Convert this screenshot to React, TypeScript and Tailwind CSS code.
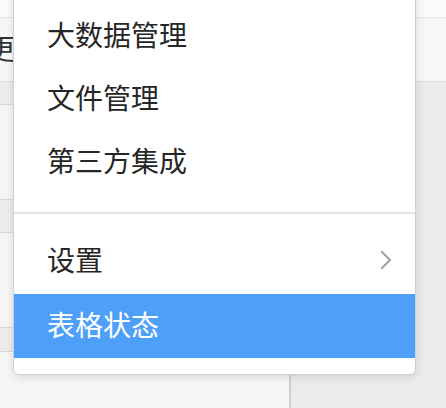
const topItems = ['大数据管理', '文件管理', '第三方集成']

export default function App() {
  return (
    <div
      className="relative w-[446px] h-[408px] overflow-hidden bg-[#f5f5f5]"
      style={{ fontFamily: '"Noto Sans CJK SC", "Noto Sans", sans-serif' }}
    >
      {/* table behind the menu */}
      <div className="flex h-full">
        <div className="flex flex-col w-[289px]">
          <div className="h-[18px] bg-[#fafafa] border-b border-[#e2e2e2]" />
          <div className="h-[64px] bg-[#f7f7f7] border-b border-[#dcdcdc] flex items-center pb-[4px]">
            <div className="w-[15px] overflow-hidden flex justify-end">
              <span className="text-[28px] leading-none text-[#333] whitespace-nowrap">变更</span>
            </div>
          </div>
          <div className="h-[23px] bg-[#ececec] border-b border-[#d8d8d8]" />
          <div className="h-[94px] bg-[#f5f5f5]" />
          <div className="h-[34px] bg-[#ececec] border-y border-[#d8d8d8]" />
          <div className="h-[94px] bg-[#f5f5f5]" />
          <div className="h-[25px] bg-[#ececec] border-y border-[#d8d8d8]" />
          <div className="flex-1 bg-[#f5f5f5]" />
        </div>
        <div className="flex-1 flex flex-col border-l-2 border-[#cfcfcf]">
          <div className="h-[18px] bg-[#fafafa] border-b border-[#e2e2e2]" />
          <div className="h-[64px] bg-[#f7f7f7] border-b border-[#dcdcdc]" />
          <div className="flex-1 bg-[#ebebeb]" />
        </div>
      </div>

      {/* dropdown menu */}
      <div className="absolute left-[13px] top-[-12px] w-[403px] bg-white border border-[#cdd1d7] rounded-b-[6px] shadow-[0_2px_8px_rgba(0,0,0,0.12)] pt-[16px] pb-[16px]">
        <div className="pb-[18px]">
          {topItems.map((label) => (
            <div key={label} className="h-[63px] flex items-center pl-[33px] pb-[6px] text-[28px] text-[#262626]">
              {label}
            </div>
          ))}
        </div>
        <div className="h-[2px] bg-[#e4e6ea]" />
        <div className="pt-[16px]">
          <div className="h-[64px] flex items-center justify-between pl-[33px] pr-[22px] pb-[6px] text-[28px] text-[#262626]">
            <span>设置</span>
            <svg width="14" height="20" viewBox="0 0 14 20" fill="none" className="mt-[2px]">
              <polyline points="3,2 11,10 3,18" stroke="#a3a3a3" strokeWidth="2.2" strokeLinecap="round" strokeLinejoin="round" />
            </svg>
          </div>
          <div className="h-[64px] flex items-center pl-[33px] pb-[4px] text-[28px] text-white bg-[#4d9ff8]">
            表格状态
          </div>
        </div>
      </div>
    </div>
  )
}
